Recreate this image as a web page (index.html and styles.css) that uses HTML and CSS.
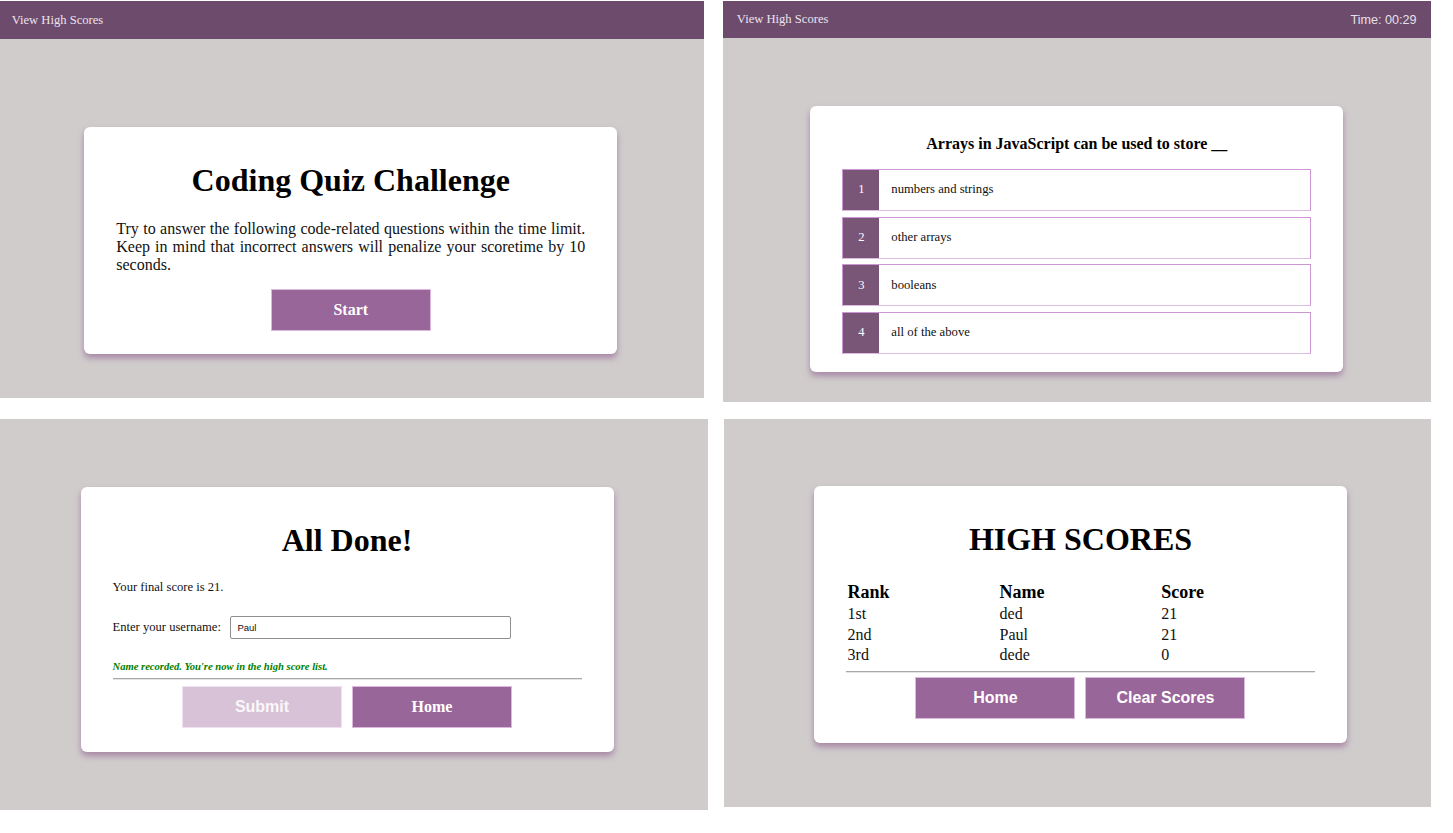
FILE: index.html
```html
<!DOCTYPE html>
<html lang="en">
<head>
<meta charset="utf-8">
<title>Coding Quiz Challenge</title>
<link rel="stylesheet" href="styles.css">
</head>
<body>
<div class="board">

  <section class="screen screen--start">
    <header class="topbar topbar--start">
      <a class="topbar__link">View High Scores</a>
    </header>
    <div class="stage stage--start">
      <div class="card">
        <h1 class="card__title">Coding Quiz Challenge</h1>
        <p class="intro">Try to answer the following code-related questions within the time limit. Keep in mind that incorrect answers will penalize your scoretime by 10 seconds.</p>
        <div class="actions actions--start">
          <button class="btn btn--serif">Start</button>
        </div>
      </div>
    </div>
  </section>

  <section class="screen screen--quiz">
    <header class="topbar topbar--quiz">
      <a class="topbar__link">View High Scores</a>
      <span class="timer">Time: 00:29</span>
    </header>
    <div class="stage stage--quiz">
      <div class="card card--quiz">
        <h2 class="question">Arrays in JavaScript can be used to store __</h2>
        <ol class="options">
          <li class="option"><span class="option__num">1</span><span class="option__text">numbers and strings</span></li>
          <li class="option"><span class="option__num">2</span><span class="option__text">other arrays</span></li>
          <li class="option"><span class="option__num">3</span><span class="option__text">booleans</span></li>
          <li class="option"><span class="option__num">4</span><span class="option__text">all of the above</span></li>
        </ol>
      </div>
    </div>
  </section>

  <section class="screen screen--done">
    <div class="stage stage--done">
      <div class="card card--done">
        <h1 class="card__title">All Done!</h1>
        <p class="final">Your final score is 21.</p>
        <div class="entry">
          <label class="entry__label" for="username">Enter your username:</label>
          <input class="entry__input" id="username" type="text" value="Paul">
        </div>
        <p class="notice">Name recorded. You're now in the high score list.</p>
        <div class="rule rule--done"></div>
        <div class="actions actions--done">
          <button class="btn btn--sans btn--disabled">Submit</button>
          <button class="btn btn--serif">Home</button>
        </div>
      </div>
    </div>
  </section>

  <section class="screen screen--scores">
    <div class="stage stage--scores">
      <div class="card card--scores">
        <h1 class="card__title">HIGH SCORES</h1>
        <table class="scores">
          <thead>
            <tr><th class="col-rank">Rank</th><th class="col-name">Name</th><th>Score</th></tr>
          </thead>
          <tbody>
            <tr><td>1st</td><td>ded</td><td>21</td></tr>
            <tr><td>2nd</td><td>Paul</td><td>21</td></tr>
            <tr><td>3rd</td><td>dede</td><td>0</td></tr>
          </tbody>
        </table>
        <div class="rule rule--scores"></div>
        <div class="actions actions--scores">
          <button class="btn btn--sans">Home</button>
          <button class="btn btn--sans">Clear Scores</button>
        </div>
      </div>
    </div>
  </section>

</div>
</body>
</html>
```

FILE: styles.css
```css
* { box-sizing: border-box; }

html, body {
  margin: 0;
  padding: 0;
  background: #ffffff;
}

body {
  font-family: "Liberation Serif", "Times New Roman", serif;
  color: #000;
}

.board {
  display: grid;
  grid-template-columns: 708px 708px;
  column-gap: 15px;
  row-gap: 17.3px;
  padding-top: 1px;
  align-items: start;
  justify-items: start;
}

.screen {
  background: #d0cccc;
  display: flex;
  flex-direction: column;
}

.screen--start { width: 703.5px; height: 397.3px; }
.screen--quiz { width: 707.6px; height: 400.7px; }
.screen--done { width: 708px; height: 391px; }
.screen--scores { width: 706.4px; height: 387.7px; margin-left: 1.2px; }

.topbar {
  background: #6d4b6d;
  height: 38px;
  flex: 0 0 auto;
  display: flex;
  justify-content: space-between;
  align-items: center;
  color: #ebe2eb;
  font-size: 12.6px;
}

.topbar--start { padding: 0 14px 0 11.7px; }
.topbar--quiz { padding: 0 14px 0 13.8px; height: 37.3px; }

.topbar__link {
  color: #ece3ec;
  text-decoration: none;
}

.timer {
  font-family: "Liberation Sans", Arial, sans-serif;
  font-size: 12.6px;
  color: #e6e0e6;
}

.stage {
  flex: 1 1 auto;
  display: flex;
  justify-content: center;
  align-items: flex-start;
}

.stage--start { padding-top: 87.7px; padding-right: 2px; }
.stage--quiz { padding-top: 67.7px; }
.stage--done { padding-top: 68.3px; padding-right: 14px; }
.stage--scores { padding-top: 67.3px; padding-left: 6.2px; }

.card {
  width: 533px;
  background: #ffffff;
  border-radius: 6px;
  box-shadow: 0 4px 6px rgba(140, 90, 140, 0.6);
  padding: 33px 32px 22.7px;
}

.card--quiz { padding: 28px 32px 18.4px; }
.card--done { padding: 33px 32px 24px; }
.card--scores { padding: 33px 32px 23.4px; }

.card__title {
  margin: 0;
  font-size: 32px;
  line-height: 40px;
  font-weight: bold;
  text-align: center;
}

.intro {
  margin: 20px 0 0;
  font-size: 16px;
  line-height: 18px;
  text-align: justify;
  color: #111;
}

.actions {
  display: flex;
  justify-content: center;
  gap: 10px;
}

.actions--start { margin-top: 15.6px; }
.actions--done { margin-top: 6px; }
.actions--scores { margin-top: 4px; }

.btn {
  width: 160px;
  height: 42px;
  padding: 0;
  margin: 0;
  border: 1px solid #dcb9dc;
  background: #996699;
  color: #ffffff;
  font-size: 16px;
  font-weight: bold;
  cursor: pointer;
}

.btn--serif { font-family: "Liberation Serif", "Times New Roman", serif; }
.btn--sans { font-family: "Liberation Sans", Arial, sans-serif; }

.btn--disabled {
  background: #d8c2d8;
  border-color: #efe2ef;
  color: rgba(255, 255, 255, 0.9);
}

/* quiz */
.question {
  margin: 0;
  font-size: 16px;
  line-height: 20px;
  font-weight: bold;
  text-align: center;
}

.options {
  list-style: none;
  margin: 15px 0 0;
  padding: 0;
  display: flex;
  flex-direction: column;
  gap: 5.67px;
}

.option {
  display: flex;
  align-items: stretch;
  height: 42px;
  border: 1px solid #cc96d2;
  border-bottom-color: #dcbce2;
  background: #ffffff;
}

.option__num {
  width: 36px;
  flex: 0 0 36px;
  background: #795577;
  color: #ffffff;
  font-size: 12.6px;
  display: flex;
  align-items: center;
  justify-content: center;
}

.option__text {
  display: flex;
  align-items: center;
  padding-left: 12px;
  font-size: 12.7px;
  color: #111;
}

/* done */
.final {
  margin: 19px 0 0;
  font-size: 12.6px;
  line-height: 16px;
  color: #111;
}

.entry {
  margin-top: 21px;
  display: flex;
  align-items: center;
  gap: 9.5px;
  height: 23px;
}

.entry__label {
  font-size: 12.6px;
  color: #111;
}

.entry__input {
  width: 281px;
  height: 23px;
  margin: 0;
  padding: 0 6px;
  border: 1px solid #8f8f8f;
  border-radius: 2px;
  font-family: "Liberation Sans", Arial, sans-serif;
  font-size: 9.5px;
  color: #111;
  background: #fff;
}

.notice {
  margin: 21.2px 0 0;
  font-size: 10.6px;
  line-height: 14px;
  font-style: italic;
  font-weight: bold;
  color: #008000;
}

.rule {
  height: 2px;
  background: #a9a9a9;
  border-bottom: 1px solid #e4e4e4;
}

.rule--done { margin-top: 4px; }
.rule--scores { margin-top: 6px; }

/* scores */
.scores {
  width: 100%;
  margin-top: 21.2px;
  border-collapse: collapse;
  table-layout: fixed;
}

.scores th,
.scores td {
  padding: 0 0 0 1.6px;
  text-align: left;
}

.scores th {
  font-size: 18px;
  line-height: 24px;
  font-weight: bold;
}

.scores td {
  font-size: 16px;
  line-height: 20.3px;
  color: #111;
}

.col-rank { width: 152px; }
.col-name { width: 161.7px; }
```
